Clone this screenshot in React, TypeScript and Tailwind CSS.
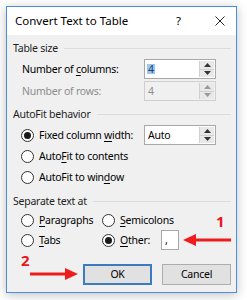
import type { ReactNode } from "react";

function Radio({ checked }: { checked?: boolean }) {
  return (
    <span className="flex h-[13px] w-[13px] shrink-0 items-center justify-center rounded-full border border-[#333] bg-white">
      {checked ? <span className="h-[7px] w-[7px] rounded-full bg-[#1a1a1a]" /> : null}
    </span>
  );
}

function U({ children }: { children: ReactNode }) {
  return <span className="underline decoration-1 underline-offset-2">{children}</span>;
}

function Spin({ disabled }: { disabled?: boolean }) {
  const c = disabled ? "#9a9a9a" : "#333";
  return (
    <div className="flex h-full w-[15px] flex-col border-l border-[#d0d0d0] bg-[#e8e8e8]">
      <div className="flex flex-1 items-center justify-center border-b border-[#d0d0d0]">
        <svg width="7" height="4" viewBox="0 0 7 4">
          <path d="M0 4 L3.5 0 L7 4 Z" fill={c} />
        </svg>
      </div>
      <div className="flex flex-1 items-center justify-center">
        <svg width="7" height="4" viewBox="0 0 7 4">
          <path d="M0 0 L3.5 4 L7 0 Z" fill={c} />
        </svg>
      </div>
    </div>
  );
}

function Header({ label }: { label: string }) {
  return (
    <div className="flex h-[14px] items-center gap-[6px] pr-[5px]">
      <span className="text-[#1e1e1e]">{label}</span>
      <div className="h-px flex-1 bg-[#dcdcdc]" />
    </div>
  );
}

export default function App() {
  return (
    <div
      className="h-[300px] w-[247px] whitespace-nowrap bg-white pl-[6px] pt-[6px] text-[10.5px] leading-none tracking-[-0.25px] text-black"
      style={{ fontFamily: '"Noto Sans", "Open Sans", sans-serif' }}
    >
      <div className="relative flex h-[287px] w-[231px] flex-col border border-[#4a8fd8] bg-[#f0f0f0] shadow-[0_2px_10px_rgba(0,0,0,0.25)]">
        {/* title bar */}
        <div className="flex h-[28px] items-center bg-white pl-[8px] pr-[11px] text-[11.5px] tracking-normal">
          <span className="flex-1">Convert Text to Table</span>
          <span className="mr-[34px]">?</span>
          <svg width="10" height="10" viewBox="0 0 10 10">
            <path d="M0.5 0.5 L9.5 9.5 M9.5 0.5 L0.5 9.5" stroke="#222" strokeWidth="1" />
          </svg>
        </div>

        <div className="flex flex-col pl-[6px] pt-[6px]">
          <Header label="Table size" />
          <div className="mt-[4px] flex h-[20px] items-center">
            <span className="w-[131px] pl-[9px]">
              Number of <U>c</U>olumns:
            </span>
            <div className="flex h-[20px] w-[72px] items-stretch border border-[#a8a8a8] bg-white p-[1px]">
              <div className="flex flex-1 items-center pl-[1px]">
                <span className="bg-[#99c8f0] px-px text-[#1c3d6e]">4</span>
              </div>
              <Spin />
            </div>
          </div>
          <div className="mt-[2px] flex h-[20px] items-center text-[#8d8d8d]">
            <span className="w-[131px] pl-[9px]">Number of rows:</span>
            <div className="flex h-[20px] w-[72px] items-stretch border border-[#cfcfcf] bg-[#f0f0f0] p-[1px]">
              <div className="flex flex-1 items-center pl-[2px]">4</div>
              <Spin disabled />
            </div>
          </div>

          <div className="mt-[6px]">
            <Header label="AutoFit behavior" />
          </div>
          <div className="mt-[4px] flex h-[20px] items-center">
            <div className="flex w-[131px] items-center gap-[5px] pl-[8px]">
              <Radio checked />
              <span>
                Fixed column <U>w</U>idth:
              </span>
            </div>
            <div className="flex h-[20px] w-[72px] items-stretch border border-[#a8a8a8] bg-white p-[1px]">
              <div className="flex flex-1 items-center pl-[2px]">Auto</div>
              <Spin />
            </div>
          </div>
          <div className="mt-[1px] flex h-[20px] items-center gap-[5px] pl-[8px]">
            <Radio />
            <span>
              Auto<U>F</U>it to contents
            </span>
          </div>
          <div className="mt-[1px] flex h-[20px] items-center gap-[5px] pl-[8px]">
            <Radio />
            <span>
              AutoFit to win<U>d</U>ow
            </span>
          </div>

          <div className="mt-[7px]">
            <Header label="Separate text at" />
          </div>
          <div className="mt-[3px] flex h-[19px] items-center pl-[8px]">
            <div className="flex w-[81px] items-center gap-[5px]">
              <Radio />
              <span>
                <U>P</U>aragraphs
              </span>
            </div>
            <div className="flex items-center gap-[5px]">
              <Radio />
              <span>
                <U>S</U>emicolons
              </span>
            </div>
          </div>
          <div className="flex h-[20px] items-center pl-[8px]">
            <div className="flex w-[81px] items-center gap-[5px]">
              <Radio />
              <span>
                <U>T</U>abs
              </span>
            </div>
            <div className="flex w-[59px] items-center gap-[5px]">
              <Radio checked />
              <span>
                <U>O</U>ther:
              </span>
            </div>
            <div className="flex h-[20px] w-[18px] items-center border border-[#a8a8a8] bg-white pl-[3px]">,</div>
          </div>

          <div className="mt-[14px] flex gap-[10px] pl-[70px]">
            <button className="flex h-[21px] w-[69px] items-center justify-center border-2 border-[#3d7bbd] bg-[#e1e1e1]">
              OK
            </button>
            <button className="flex h-[21px] w-[69px] items-center justify-center border border-[#adadad] bg-[#e1e1e1]">
              Cancel
            </button>
          </div>
        </div>

        {/* annotations */}
        <span className="absolute left-[209px] top-[207px] text-[15px] font-bold tracking-normal text-[#e8151b]">1</span>
        <svg className="absolute left-[175px] top-[226px]" width="50" height="14" viewBox="0 0 50 14">
          <path d="M13 5.5 H49 V8.5 H13 Z" fill="#ee1c1c" />
          <path d="M1 7 L14 1 L14 13 Z" fill="#ee1c1c" />
        </svg>
        <span className="absolute left-[14px] top-[246px] text-[15px] font-bold tracking-normal text-[#e8151b]">2</span>
        <svg className="absolute left-[22px] top-[260px]" width="50" height="14" viewBox="0 0 50 14">
          <path d="M1 5.5 H37 V8.5 H1 Z" fill="#ee1c1c" />
          <path d="M49 7 L36 1 L36 13 Z" fill="#ee1c1c" />
        </svg>
      </div>
    </div>
  );
}
